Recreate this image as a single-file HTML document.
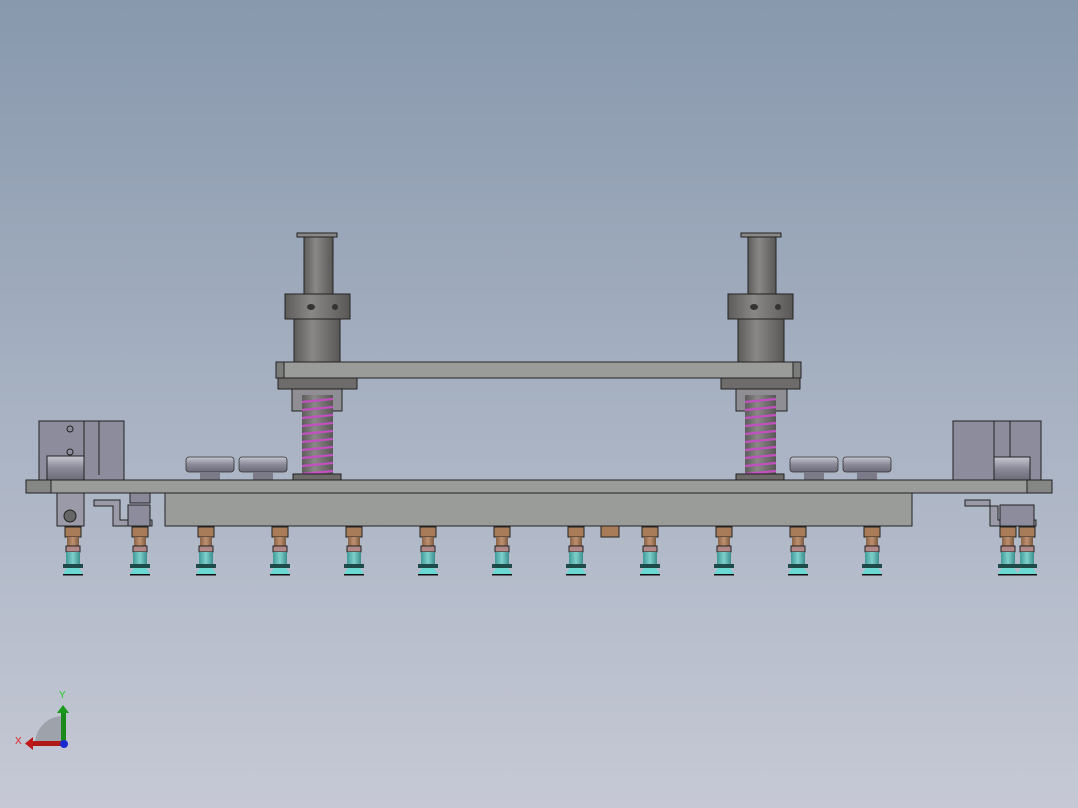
<!DOCTYPE html>
<html><head><meta charset="utf-8"><style>
html,body{margin:0;padding:0;width:1078px;height:808px;overflow:hidden}
body{background:linear-gradient(#8898ad 0%,#a4afc0 45%,#c6c9d5 100%)}
svg{position:absolute;left:0;top:0}
</style></head><body>
<svg width="1078" height="808" viewBox="0 0 1078 808" xmlns="http://www.w3.org/2000/svg">
<defs>
<linearGradient id="cyl" x1="0" x2="1"><stop offset="0" stop-color="#5e5c5a"/><stop offset=".4" stop-color="#8a8886"/><stop offset="1" stop-color="#5a5856"/></linearGradient>
<linearGradient id="knob" x1="0" y1="0" x2="0" y2="1"><stop offset="0" stop-color="#c8c8d4"/><stop offset=".5" stop-color="#8a8a98"/><stop offset="1" stop-color="#6a6a78"/></linearGradient>
<linearGradient id="teal" x1="0" x2="1"><stop offset="0" stop-color="#3f9a98"/><stop offset=".5" stop-color="#7fd0cc"/><stop offset="1" stop-color="#3a8e8c"/></linearGradient>
<linearGradient id="brass" x1="0" x2="1"><stop offset="0" stop-color="#8a6446"/><stop offset=".5" stop-color="#c09070"/><stop offset="1" stop-color="#7a5a40"/></linearGradient>
<g id="cup">
<rect x="-8" y="527" width="16" height="10" fill="#a87c58" stroke="#222" stroke-width="1"/>
<rect x="-6" y="537" width="12" height="9" fill="url(#brass)"/>
<rect x="-7" y="546" width="14" height="6" fill="#b08888" stroke="#222" stroke-width="1"/>
<rect x="-7" y="552" width="14" height="12" fill="url(#teal)"/>
<rect x="-10" y="564" width="20" height="4" fill="#1f4a4a"/>
<path d="M-6 568 L6 568 L10 574 L-10 574 Z" fill="#6cd8d4"/>
<rect x="-10" y="574" width="20" height="1.5" fill="#111"/>
</g>
<g id="knobg">
<rect x="0" y="457" width="48" height="15" rx="3" fill="url(#knob)" stroke="#333" stroke-width=".8"/>
<rect x="14" y="472" width="20" height="8" fill="#7a7a88"/>
</g>
</defs>

<!-- columns -->
<g stroke="#222" stroke-width="1">
<rect x="297" y="233" width="40" height="4" fill="#8a8886"/>
<rect x="304" y="237" width="29" height="58" fill="url(#cyl)"/>
<rect x="285" y="294" width="65" height="25" fill="url(#cyl)"/>
<rect x="294" y="319" width="46" height="43" fill="url(#cyl)"/>
<rect x="741" y="233" width="40" height="4" fill="#8a8886"/>
<rect x="748" y="237" width="28" height="58" fill="url(#cyl)"/>
<rect x="728" y="294" width="65" height="25" fill="url(#cyl)"/>
<rect x="738" y="319" width="46" height="43" fill="url(#cyl)"/>
</g>
<g fill="#333"><ellipse cx="311" cy="307" rx="4" ry="3"/><ellipse cx="335" cy="307" rx="3" ry="3"/><ellipse cx="754" cy="307" rx="4" ry="3"/><ellipse cx="778" cy="307" rx="3" ry="3"/></g>
<!-- top plate -->
<rect x="276" y="362" width="525" height="16" fill="#9a9c9a" stroke="#222"/>
<rect x="276" y="362" width="8" height="16" fill="#7a7c7a" stroke="#222"/>
<rect x="793" y="362" width="8" height="16" fill="#7a7c7a" stroke="#222"/>
<rect x="278" y="378" width="79" height="11" fill="#6e6c6a" stroke="#222"/>
<rect x="721" y="378" width="79" height="11" fill="#6e6c6a" stroke="#222"/>
<rect x="292" y="389" width="50" height="22" fill="#8e8e94" stroke="#222"/>
<rect x="736" y="389" width="51" height="22" fill="#8e8e94" stroke="#222"/>
<rect x="302" y="395" width="31" height="80" fill="url(#cyl)"/>
<rect x="745" y="395" width="31" height="80" fill="url(#cyl)"/>
<g stroke="#c050c0" stroke-width="2.2" fill="none">
<path d="M302 402 L333 399 M302 410 L333 407 M302 418 L333 415 M302 426 L333 423 M302 434 L333 431 M302 442 L333 439 M302 450 L333 447 M302 458 L333 455 M302 466 L333 463 M302 474 L333 471"/>
<path d="M745 402 L776 399 M745 410 L776 407 M745 418 L776 415 M745 426 L776 423 M745 434 L776 431 M745 442 L776 439 M745 450 L776 447 M745 458 L776 455 M745 466 L776 463 M745 474 L776 471"/>
</g>
<rect x="293" y="474" width="48" height="6" fill="#6e6c6a" stroke="#222"/>
<rect x="736" y="474" width="48" height="6" fill="#6e6c6a" stroke="#222"/>

<!-- knobs -->
<use href="#knobg" x="186"/><use href="#knobg" x="239"/><use href="#knobg" x="790"/><use href="#knobg" x="843"/>

<!-- cylinders -->
<g stroke="#222" stroke-width="1">
<rect x="39" y="421" width="85" height="59" fill="#8c8c9c"/>
<line x1="84" y1="421" x2="84" y2="480"/><line x1="99" y1="421" x2="99" y2="475"/>
<rect x="47" y="456" width="37" height="24" fill="url(#knob)"/>
<rect x="953" y="421" width="88" height="59" fill="#8c8c9c"/>
<line x1="994" y1="421" x2="994" y2="480"/><line x1="1010" y1="421" x2="1010" y2="460"/>
<rect x="994" y="457" width="36" height="23" fill="url(#knob)"/>
</g>
<circle cx="70" cy="429" r="3" fill="none" stroke="#222"/><circle cx="70" cy="452" r="3" fill="none" stroke="#222"/>

<!-- base plate -->
<rect x="26" y="480" width="1026" height="13" fill="#9a9c9a" stroke="#222"/>
<rect x="26" y="480" width="25" height="13" fill="#858785" stroke="#222"/>
<rect x="1027" y="480" width="25" height="13" fill="#858785" stroke="#222"/>
<rect x="165" y="493" width="747" height="33" fill="#9a9c9a" stroke="#222"/>
<rect x="601" y="526" width="18" height="11" fill="#a87c58" stroke="#222"/>

<!-- left bracket parts -->
<g stroke="#222" stroke-width="1" fill="#9a9aa8">
<rect x="57" y="493" width="27" height="33"/>
<circle cx="70" cy="516" r="6" fill="#666"/>
<path d="M94 500 L120 500 L120 520 L152 520 L152 526 L113 526 L113 506 L94 506 Z"/>
<rect x="130" y="493" width="20" height="10" fill="#888898"/>
<rect x="128" y="505" width="22" height="21" fill="#8c8c9c"/>
<path d="M965 500 L990 500 L990 526 L1036 526 L1036 520 L998 520 L998 506 L965 506 Z"/>
<rect x="1000" y="505" width="34" height="21" fill="#8c8c9c"/>
</g>

<!-- cups -->
<use href="#cup" x="73"/><use href="#cup" x="140"/><use href="#cup" x="206"/><use href="#cup" x="280"/><use href="#cup" x="354"/><use href="#cup" x="428"/><use href="#cup" x="502"/><use href="#cup" x="576"/><use href="#cup" x="650"/><use href="#cup" x="724"/><use href="#cup" x="798"/><use href="#cup" x="872"/><use href="#cup" x="1008"/><use href="#cup" x="1027"/>

<!-- triad -->
<path d="M35 744 A28 28 0 0 1 63 716 L63 744 Z" fill="#9ea2aa"/>
<rect x="61" y="712" width="5" height="32" fill="#1a8a1a"/>
<path d="M57 713 L63 705 L69 713 Z" fill="#1a9a1a"/>
<rect x="32" y="741" width="32" height="5" fill="#b01818"/>
<path d="M33 737 L25 743.5 L33 750 Z" fill="#c01818"/>
<circle cx="64" cy="744" r="4" fill="#1a2ad0"/>
<text x="59" y="698" font-family="Liberation Sans, sans-serif" font-size="10" fill="#22cc22">Y</text>
<text x="15" y="744" font-family="Liberation Sans, sans-serif" font-size="10" fill="#dd2222">X</text>
</svg>
</body></html>
